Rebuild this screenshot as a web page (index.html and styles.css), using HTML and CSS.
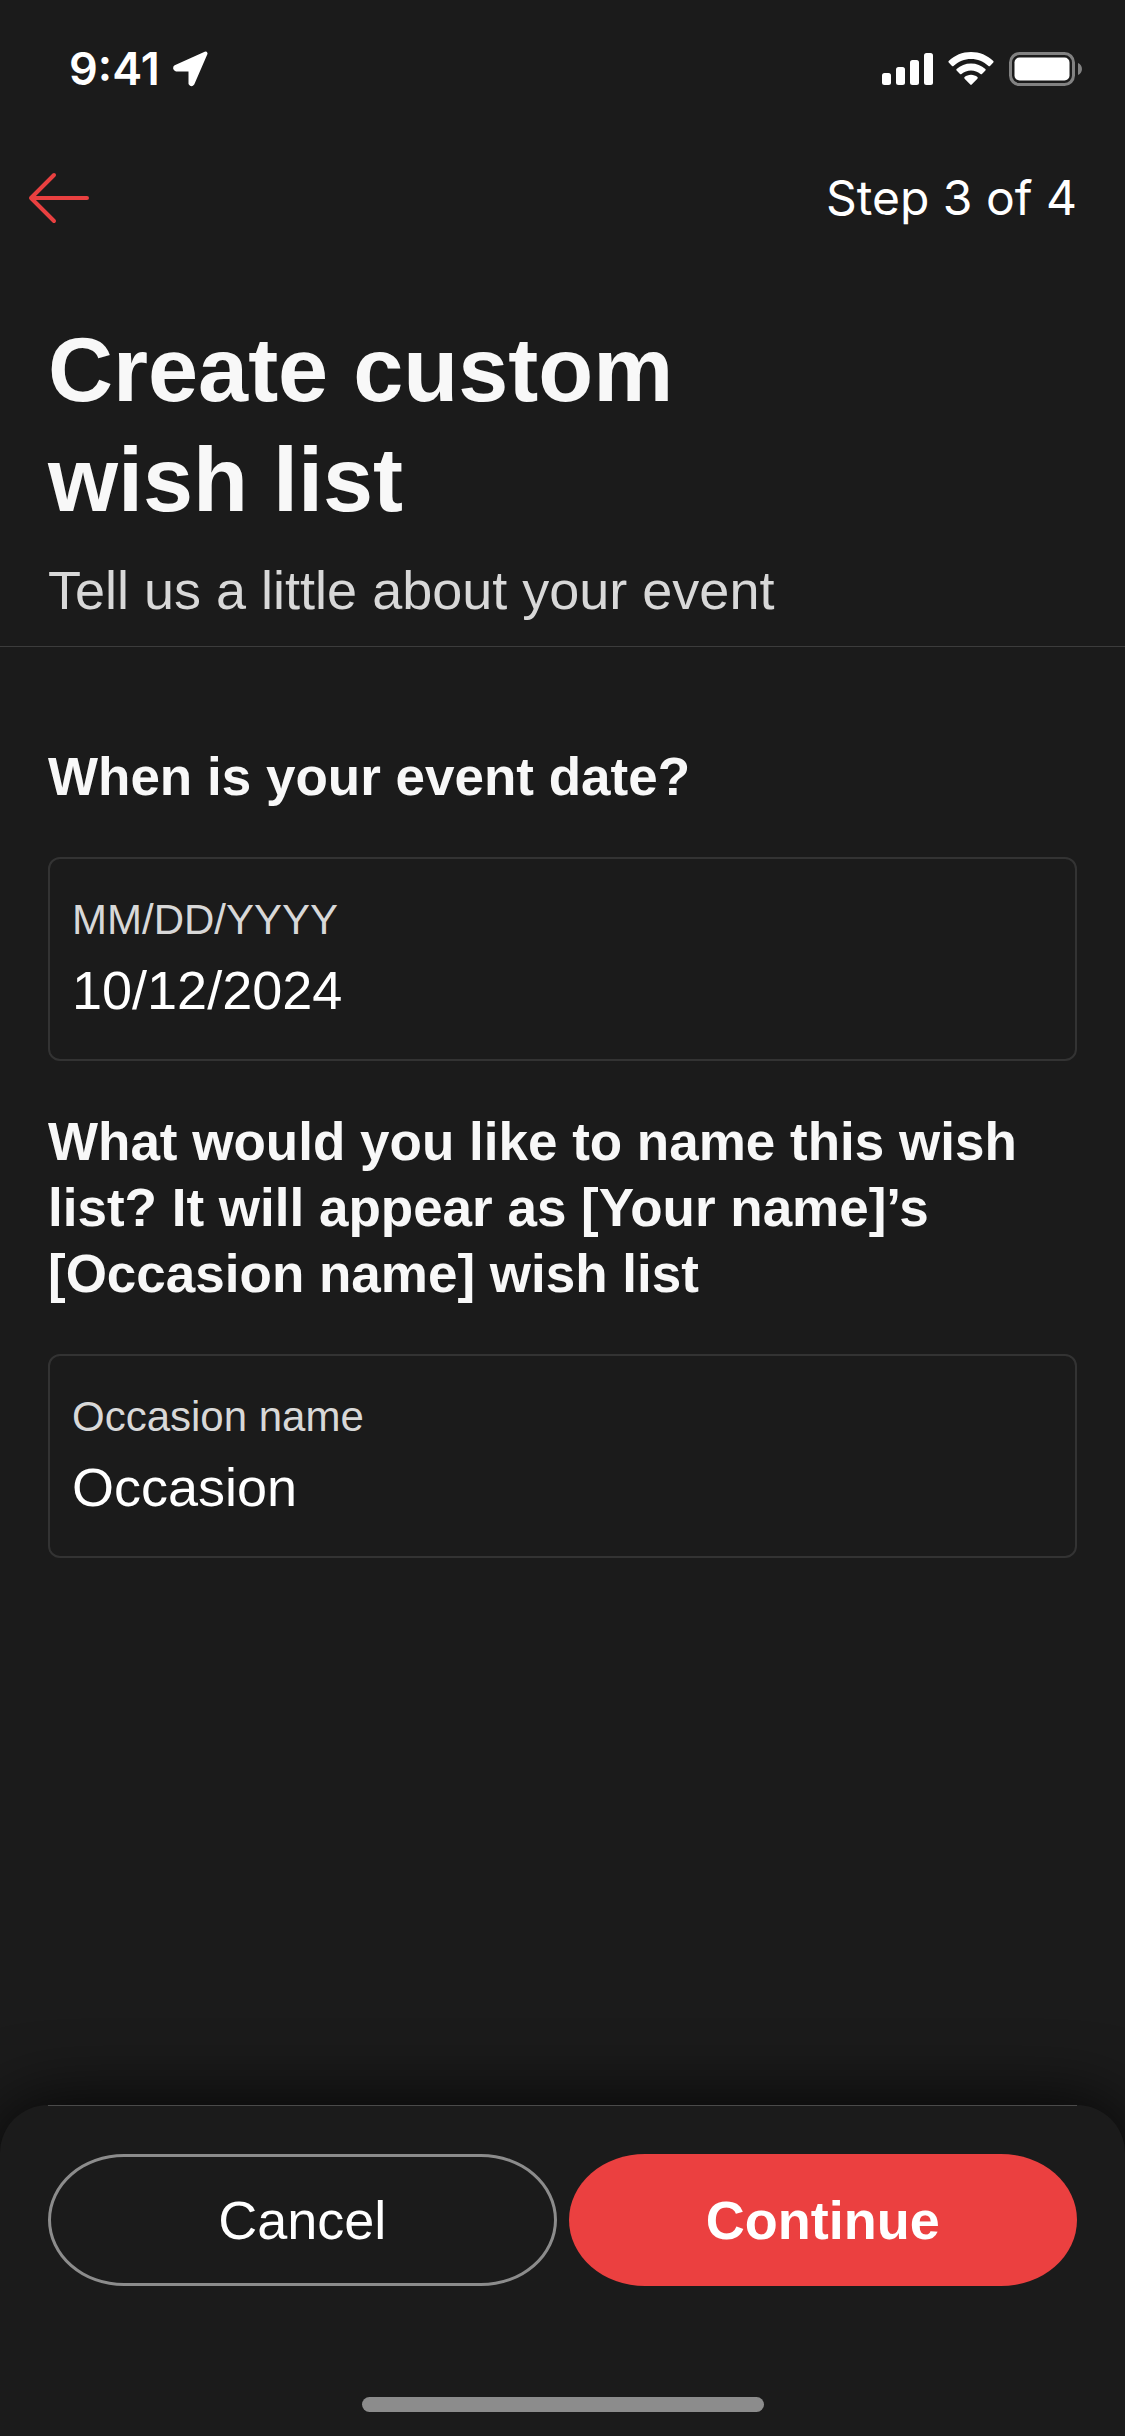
FILE: index.html
```html
<!DOCTYPE html>
<html lang="en">
<head>
    <meta charset="UTF-8">
    <meta name="viewport" content="width=device-width, initial-scale=1.0">
    <title>Create custom wish list</title>
    <link rel="stylesheet" href="styles.css">
</head>
<body>
    <!-- Status bar -->
    <div class="status-bar">
        <div class="status-left">
            <span class="time">9:41</span>
            <svg width="36" height="36" viewBox="0 0 36 36" aria-hidden="true">
                <path d="M2.500 16 32.500 2.500 19.500 32.500Q18.500 34 17.500 32.500V18.500H3.500Q1.500 18 2.500 16Z" fill="#fff" stroke="#fff" stroke-width="4" stroke-linejoin="round"/>
            </svg>
        </div>
        <div class="status-right">
            <svg width="51" height="34" viewBox="0 0 51 34" fill="#fff" aria-hidden="true">
                <rect x="0" y="21" width="9" height="12" rx="2.5"/>
                <rect x="14" y="15" width="9" height="18" rx="2.5"/>
                <rect x="28" y="8" width="9" height="25" rx="2.5"/>
                <rect x="42" y="1" width="9" height="32" rx="2.5"/>
            </svg>
            <svg width="46" height="34" viewBox="0 0 46 34" fill="#fff" aria-hidden="true">
                <path d="M23 0C31.5 0 39.500 3.300 45.300 9Q46 9.800 45.300 10.500L42 14Q41.200 14.600 40.500 14C35.700 9.500 29.500 7 23 7S10.300 9.500 5.500 14Q4.800 14.600 4 14L.7 10.500Q0 9.800.7 9C6.500 3.300 14.500 0 23 0Z"/>
                <path d="M23 11.500C28.500 11.500 33.500 13.500 37.400 17.100Q38.100 17.900 37.400 18.600L34 22Q33.200 22.700 32.500 22C29.800 19.700 26.500 18.500 23 18.500S16.200 19.700 13.500 22Q12.800 22.700 12 22L8.600 18.600Q7.900 17.900 8.600 17.100C12.500 13.500 17.500 11.500 23 11.500Z"/>
                <path d="M23 22.800C25.500 22.800 27.700 23.700 29.400 25.100Q30.200 25.900 29.400 26.700L23.700 32.600Q23 33.300 22.300 32.600L16.600 26.700Q15.800 25.900 16.600 25.100C18.300 23.700 20.500 22.800 23 22.800Z"/>
            </svg>
            <svg width="73" height="34" viewBox="0 0 73 34" aria-hidden="true">
                <rect x="1.500" y="1.500" width="63" height="31" rx="9" fill="none" stroke="#828282" stroke-width="3"/>
                <rect x="5.500" y="5.500" width="55" height="23" rx="5" fill="#fff"/>
                <path d="M69 11C74.300 13 74.300 21 69 23Z" fill="#828282"/>
            </svg>
        </div>
    </div>

    <!-- Back button and step counter -->
    <nav class="nav-bar">
        <button class="back-btn" type="button" aria-label="Back">
            <svg width="62" height="54" viewBox="0 0 62 54" fill="none" stroke="#e94040" stroke-width="4" stroke-linecap="round" stroke-linejoin="round" aria-hidden="true">
                <path d="M60 27H4M27 4 4 27 27 50"/>
            </svg>
        </button>
        <span class="step">Step 3 of 4</span>
    </nav>

    <header class="page-header">
        <h1>Create custom<br>wish list</h1>
        <p>Tell us a little about your event</p>
    </header>

    <form class="event-form" id="eventForm">
        <h2>When is your event date?</h2>
        <div class="field">
            <label for="eventDate">MM/DD/YYYY</label>
            <input type="text" id="eventDate" value="10/12/2024">
        </div>

        <h2>What would you like to name this wish list? It will appear as [Your name]’s [Occasion name] wish list</h2>
        <div class="field">
            <label for="occasionName">Occasion name</label>
            <input type="text" id="occasionName" value="Occasion">
        </div>
    </form>

    <!-- Bottom actions -->
    <footer class="action-sheet">
        <div class="buttons">
            <button class="btn cancel" type="button">Cancel</button>
            <button class="btn continue" type="submit" form="eventForm">Continue</button>
        </div>
        <div class="home-indicator"></div>
    </footer>
</body>
</html>
```

FILE: styles.css
```css
* {
    box-sizing: border-box;
}

body {
    margin: 0;
    min-height: 100vh;
    display: flex;
    flex-direction: column;
    overflow-x: hidden;
    background-color: #1b1b1b;
    color: #f8f8f8;
    font-family: "Liberation Sans", Arial, sans-serif;
}

svg {
    display: block;
}

h1, h2, p {
    margin: 0;
}

/* Status bar */
.status-bar {
    display: flex;
    justify-content: space-between;
    align-items: center;
    height: 138px;
    padding: 0 43px 0 69px;
}

.status-left {
    display: flex;
    align-items: center;
    gap: 13px;
}

.time {
    font-family: Inter, sans-serif;
    font-size: 45px;
    font-weight: 600;
    line-height: 54px;
    color: #fff;
}

.status-right {
    display: flex;
    align-items: center;
    gap: 15px;
}

/* Navigation */
.nav-bar {
    display: flex;
    justify-content: space-between;
    align-items: center;
    height: 120px;
    padding: 0 48px 0 27px;
}

.back-btn {
    padding: 0;
    border: none;
    background: none;
    cursor: pointer;
}

.step {
    font-family: Inter, sans-serif;
    font-size: 48px;
    line-height: 60px;
    color: #fff;
}

/* Title */
.page-header {
    padding: 57px 48px 23px;
    border-bottom: 1px solid #3c3c3c;
}

.page-header h1 {
    font-size: 90px;
    line-height: 110px;
}

.page-header p {
    margin-top: 22px;
    font-size: 54px;
    line-height: 66px;
    color: #d8d8d8;
}

/* Form */
.event-form {
    flex: 1;
    padding: 97px 48px 48px;
}

.event-form h2 {
    font-size: 53px;
    line-height: 66px;
}

.field {
    display: flex;
    flex-direction: column;
    gap: 10px;
    margin: 47px 0 48px;
    padding: 34px 22px 36px;
    border: 2px solid #333;
    border-radius: 12px;
}

.field label {
    font-size: 42px;
    line-height: 54px;
    color: #d8d8d8;
}

.field input {
    width: 100%;
    height: 66px;
    padding: 0;
    border: none;
    outline: none;
    background: none;
    color: #fff;
    font-family: inherit;
    font-size: 54px;
}

/* Bottom sheet */
.action-sheet {
    padding: 0 48px 24px;
    border-radius: 48px 48px 0 0;
    background-color: #1b1b1b;
    box-shadow: 0 0 72px rgba(0, 0, 0, 0.9);
}

.buttons {
    display: grid;
    grid-template-columns: 1fr 1fr;
    gap: 12px;
    padding: 48px 0 111px;
    border-top: 1px solid #4a4a4a;
}

.btn {
    height: 132px;
    padding: 0;
    border: none;
    border-radius: 76px / 66px;
    color: #fff;
    font-family: inherit;
    font-size: 54px;
    cursor: pointer;
}

.cancel {
    border: 3px solid #8c8c8c;
    background: none;
}

.continue {
    background-color: #eb4040;
    font-weight: bold;
}

.home-indicator {
    width: 402px;
    height: 15px;
    margin: 0 auto;
    border-radius: 8px;
    background-color: #8c8c8c;
}
```
